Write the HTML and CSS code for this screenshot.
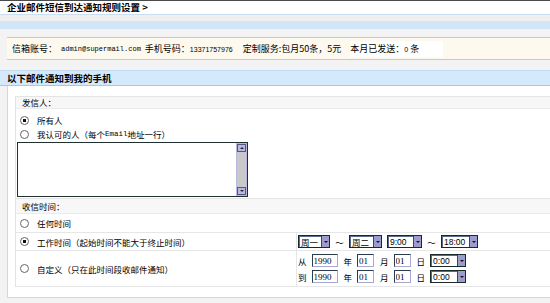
FILE: index.html
```html
<!DOCTYPE html>
<html lang="zh-CN">

<head>
  <meta charset="UTF-8">
  <title>企业邮件短信到达通知规则设置</title>
  <link rel="stylesheet" href="styles.css">
</head>

<body>
  <!-- 标题栏 -->
  <div class="topbar">企业邮件短信到达通知规则设置 &gt;</div>
  <div class="band-gray"></div>
  <div class="band-blue"></div>

  <!-- 账号信息 -->
  <div class="info">
    <span>信箱账号：</span>
    <span class="mono">admin@supermail.com</span>
    <span>手机号码：<span class="num">13371757976</span></span>
    <span class="gap">定制服务:包月50条，5元</span>
    <span class="sent">本月已发送：<span class="num">0</span> 条</span>
  </div>

  <div class="section-title">以下邮件通知到我的手机</div>

  <div class="panel">
    <div class="rules">
      <div class="head">发信人：</div>
      <div class="sender">
        <label class="opt"><input type="radio" name="from" checked>所有人</label>
        <label class="opt"><input type="radio" name="from">我认可的人（每个<span class="mono-s">Email</span>地址一行）</label>
        <div class="memo">
          <textarea></textarea>
          <div class="vbar">
            <span class="vbtn up"></span>
            <span class="vtrack"></span>
            <span class="vbtn down"></span>
          </div>
        </div>
      </div>

      <div class="head head-time">收信时间：</div>
      <div class="trow t-any">
        <label class="opt"><input type="radio" name="time">任何时间</label>
      </div>
      <div class="trow t-work">
        <div class="tleft">
          <label class="opt"><input type="radio" name="time" checked>工作时间（起始时间不能大于终止时间）</label>
        </div>
        <div class="tright">
          <div class="line">
            <span class="sel w-32">周一<i></i></span>
            <span class="tilde">～</span>
            <span class="sel w-33">周二<i></i></span>
            <span class="sel w-35 ml-5">9:00<i></i></span>
            <span class="tilde">～</span>
            <span class="sel w-37">18:00<i></i></span>
          </div>
        </div>
      </div>
      <div class="trow t-custom">
        <div class="tleft">
          <label class="opt"><input type="radio" name="time">自定义（只在此时间段收邮件通知）</label>
        </div>
        <div class="tright">
          <div class="line">
            <span class="word">从</span>
            <input class="box w-26" value="1990">
            <span class="word">年</span>
            <input class="box w-17" value="01">
            <span class="word">月</span>
            <input class="box w-17" value="01">
            <span class="word">日</span>
            <span class="sel w-36">0:00<i></i></span>
          </div>
          <div class="line">
            <span class="word">到</span>
            <input class="box w-26" value="1990">
            <span class="word">年</span>
            <input class="box w-17" value="01">
            <span class="word">月</span>
            <input class="box w-17" value="01">
            <span class="word">日</span>
            <span class="sel w-36">0:00<i></i></span>
          </div>
        </div>
      </div>
    </div>
  </div>
</body>

</html>
```

FILE: styles.css
```css
/* 全局样式 */
body {
  margin: 0;
  background: #f3f3f3;
  font-family: "Noto Sans CJK SC", "Liberation Sans", sans-serif;
  font-size: 8.5px;
  color: #000;
  overflow: hidden;
}

/* 标题栏 */
.topbar {
  height: 13px;
  line-height: 13px;
  border-top: 1px solid #4a4a4a;
  border-bottom: 1px solid #c9def2;
  background: #fff;
  padding-left: 7px;
  font-size: 9.5px;
  font-weight: bold;
}

.band-gray {
  height: 6px;
  background: #efefef;
}

.band-blue {
  height: 8px;
  background: #d0e7fa;
  margin-bottom: 8px;
}

/* 账号信息 */
.info {
  margin-left: 7px;
  height: 21px;
  display: flex;
  align-items: center;
  gap: 4px;
  padding-left: 5px;
  border-top: 1px solid #c9c9c9;
  border-bottom: 1px solid #c9c9c9;
  background: #fdf9ef;
  font-size: 9px;
}

.info .mono {
  font-family: "Liberation Mono", monospace;
  font-size: 7px;
}

.info .num {
  font-family: "Liberation Sans", sans-serif;
  font-size: 7px;
}

.info .gap {
  margin-left: 6px;
}

.sent {
  margin-left: 5px;
  background: #fff;
  padding-right: 24px;
  line-height: 15px;
}

/* 分区标题 */
.section-title {
  margin-top: 10px;
  height: 14px;
  line-height: 14px;
  padding-left: 7px;
  border-top: 1px solid #c4dcf2;
  border-bottom: 1px solid #a7c6ea;
  background: #d4e9fb;
  font-size: 9.5px;
  font-weight: bold;
}

.panel {
  margin-left: 7px;
  padding: 10px 0 10px 7px;
  border-left: 1px solid #c4dcf2;
  border-bottom: 1px solid #c4dcf2;
  background: #fff;
}

.rules {
  border: 1px solid #e4e4e4;
  border-right: none;
  border-bottom: none;
}

.head {
  height: 11px;
  line-height: 11px;
  padding-left: 6px;
  background: #f7f7f7;
  border-bottom: 1px solid #ebebeb;
}

.head-time {
  height: 14px;
  line-height: 14px;
  border-top: 1px solid #e4e4e4;
}

/* 单选项 */
.opt {
  display: flex;
  align-items: center;
  height: 14px;
  padding-left: 4px;
}

.opt input {
  appearance: none;
  width: 9px;
  height: 9px;
  margin: 0 8px 0 0;
  border: 1px solid #666;
  border-radius: 50%;
  background: #fff;
  box-sizing: border-box;
}

.opt input:checked {
  background: radial-gradient(circle, #111 0 1.6px, #fff 2px);
}

.mono-s {
  font-family: "Liberation Mono", monospace;
  font-size: 7.5px;
}

.sender {
  padding-top: 4px;
  padding-bottom: 1px;
}

.memo {
  display: flex;
  width: 229px;
  height: 53px;
  margin: 1px 0 0 1px;
  border: 1px solid #203030;
  background: #fff;
}

.memo textarea {
  flex: 1;
  border: none;
  resize: none;
  outline: none;
  padding: 0;
}

.vbar {
  width: 9px;
  display: flex;
  flex-direction: column;
  border: 1px solid #b8b8dc;
  border-width: 1px 1px 1px 1px;
}

.vbtn {
  height: 8px;
  background: #b9b9dd;
  border: 1px solid #555580;
  box-sizing: border-box;
  display: flex;
  align-items: center;
  justify-content: center;
}

.vbtn::after {
  content: "";
  border-left: 2px solid transparent;
  border-right: 2px solid transparent;
}

.vbtn.up::after {
  border-bottom: 2px solid #222244;
}

.vbtn.down::after {
  border-top: 2px solid #222244;
}

.vtrack {
  flex: 1;
  background: #c9c9c9;
}

/* 收信时间 */
.trow {
  display: flex;
  border-bottom: 1px solid #e6e6e6;
}

.t-any {
  height: 18px;
  align-items: center;
}

.t-work {
  height: 17px;
}

.t-custom {
  height: 35px;
}

.tleft {
  width: 280px;
  display: flex;
  align-items: center;
}

.tright {
  flex: 1;
  border-left: 1px solid #e6e6e6;
  padding-left: 1px;
  display: flex;
  flex-direction: column;
  justify-content: center;
  gap: 3px;
}

.line {
  display: flex;
  align-items: center;
  height: 13px;
}

.sel {
  height: 13px;
  box-sizing: border-box;
  display: flex;
  align-items: center;
  justify-content: space-between;
  padding-left: 2px;
  border: 1px solid #1a2a2a;
  box-shadow: inset 1px 1px 0 #5a6a8a;
  background: #fff;
  font-family: "Liberation Sans", "Noto Sans CJK SC", sans-serif;
  font-size: 8.5px;
}

.sel i {
  width: 8px;
  height: 11px;
  box-sizing: border-box;
  background: #9c9cce;
  border-left: 1px solid #40406a;
  display: flex;
  align-items: center;
  justify-content: center;
}

.sel i::after {
  content: "";
  border-left: 2px solid transparent;
  border-right: 2px solid transparent;
  border-top: 2px solid #111;
}

.w-32 { width: 32px; }
.w-33 { width: 33px; }
.w-35 { width: 35px; }
.w-36 { width: 36px; }
.w-37 { width: 37px; }
.w-26 { width: 26px; }
.w-17 { width: 17px; }

.ml-5 {
  margin-left: 5px;
}

.tilde {
  width: 19px;
  text-align: center;
}

.word {
  margin: 0 5px 0 0;
}

.box {
  height: 13px;
  box-sizing: border-box;
  padding: 0 0 0 1px;
  margin-right: 6px;
  border: 1px solid;
  border-color: #2c3c4c #a8a8d0 #a8a8d0 #2c3c4c;
  font-family: "Liberation Serif", serif;
  font-size: 9px;
  outline: none;
}
```
